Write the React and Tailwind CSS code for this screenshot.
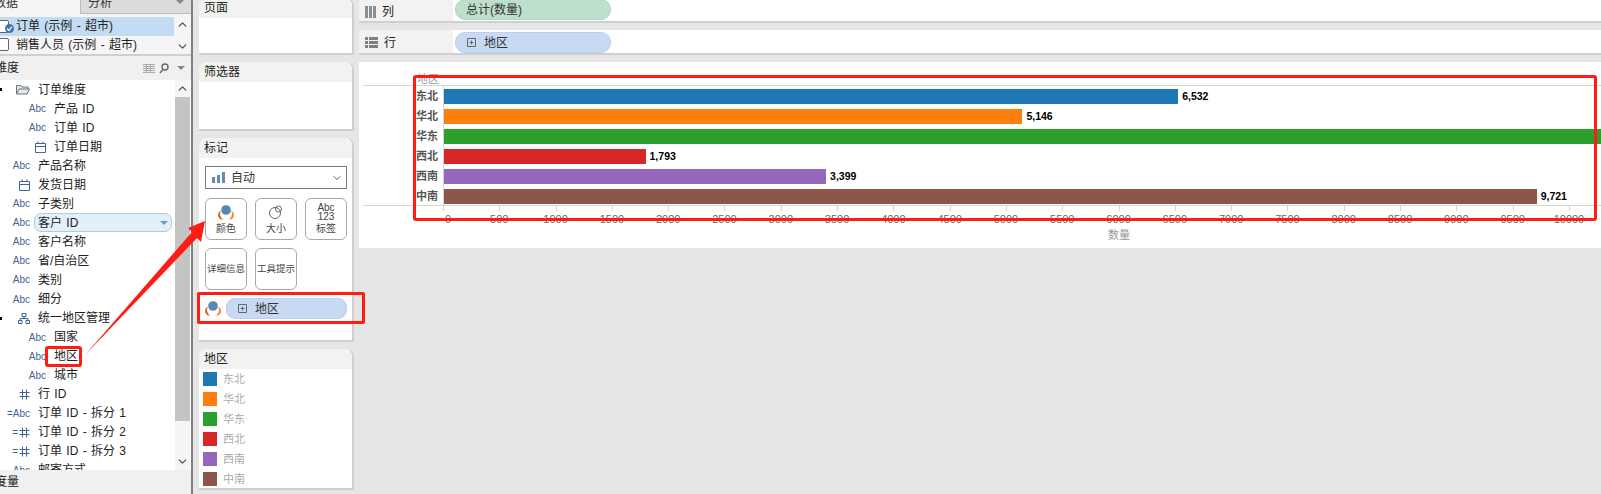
import React from 'react'
import { ChevronUp, ChevronDown } from 'lucide-react'

const fontStack = { fontFamily: '"Liberation Sans", "Noto Sans CJK SC", sans-serif' }

const fields = [
  { type: 'folder', name: '订单维度', dot: true },
  { type: 'abc', name: '产品 ID', nested: true },
  { type: 'abc', name: '订单 ID', nested: true },
  { type: 'date', name: '订单日期', nested: true },
  { type: 'abc', name: '产品名称' },
  { type: 'date', name: '发货日期' },
  { type: 'abc', name: '子类别' },
  { type: 'abc', name: '客户 ID', active: true },
  { type: 'abc', name: '客户名称' },
  { type: 'abc', name: '省/自治区' },
  { type: 'abc', name: '类别' },
  { type: 'abc', name: '细分' },
  { type: 'tree', name: '统一地区管理', dot: true },
  { type: 'abc', name: '国家', nested: true },
  { type: 'abc', name: '地区', nested: true },
  { type: 'abc', name: '城市', nested: true },
  { type: 'hash', name: '行 ID' },
  { type: 'calcAbc', name: '订单 ID - 拆分 1' },
  { type: 'calcHash', name: '订单 ID - 拆分 2' },
  { type: 'calcHash', name: '订单 ID - 拆分 3' },
  { type: 'abc', name: '邮寄方式' },
]

const regions = [
  { name: '东北', value: 6532, color: 'bg-[#1f77b4]', label: '6,532' },
  { name: '华北', value: 5146, color: 'bg-[#ff7f0e]', label: '5,146' },
  { name: '华东', value: 10400, color: 'bg-[#2ca02c]' },
  { name: '西北', value: 1793, color: 'bg-[#d62728]', label: '1,793' },
  { name: '西南', value: 3399, color: 'bg-[#9467bd]', label: '3,399' },
  { name: '中南', value: 9721, color: 'bg-[#8c564b]', label: '9,721' },
]

const ticks = Array.from({ length: 21 }, (_, i) => i * 500)

const HashIcon = () => (
  <svg width="11" height="11" viewBox="0 0 11 11" stroke="#3f6497" strokeWidth="1" fill="none">
    <path d="M3.5 0.5V10.5M7.5 0.5V10.5M0.5 3.5H10.5M0.5 7.5H10.5" />
  </svg>
)

const DateIcon = () => (
  <svg width="11" height="12" viewBox="0 0 11 12" stroke="#3f6497" strokeWidth="1" fill="none">
    <path d="M0.5 2.5H10.5V11.5H0.5ZM0.5 5.5H10.5M3 0.5V2.5M8 0.5V2.5" />
  </svg>
)

const FieldIcon = ({ type }) => {
  if (type === 'abc') return <span className="text-[10px] text-[#3f6497]">Abc</span>
  if (type === 'date') return <DateIcon />
  if (type === 'hash') return <HashIcon />
  if (type === 'calcAbc') return <span className="text-[10px] text-[#3f6497]">=Abc</span>
  if (type === 'calcHash') return (
    <span className="flex items-center gap-[1px] text-[10px] text-[#3f6497]">=<HashIcon /></span>
  )
  if (type === 'folder') return (
    <svg width="14" height="11" viewBox="0 0 14 11" fill="none" stroke="#6b7280">
      <path d="M0.5 10V1.5H5L6 3H12V5M0.5 10L3 5H13.5L11 10Z" fill="#e5e7eb" />
    </svg>
  )
  return (
    <svg width="12" height="11" viewBox="0 0 12 11" fill="none" stroke="#3f6497">
      <path d="M4 0.5H8V3.5H4ZM0.5 7.5H4V10.5H0.5ZM8 7.5H11.5V10.5H8ZM6 3.5V5.5M2 7.5V5.5H10V7.5" />
    </svg>
  )
}

const FieldRow = ({ field }) => (
  <div className="relative flex h-[19.05px] shrink-0 items-center text-[12px] text-[#222]">
    {field.dot && <span className="absolute left-0 top-[8px] h-[3px] w-[2px] bg-black" />}
    <span className={`flex w-[38px] shrink-0 justify-end pr-[8px] ${field.nested ? 'ml-[16px]' : ''}`}>
      <FieldIcon type={field.type} />
    </span>
    {field.active ? (
      <span className="-ml-[4px] flex h-[19px] w-[138px] items-center justify-between rounded-[7px] border border-[#a9cfe8] bg-[#e3f0fa] pl-[3px] pr-[3px]">
        {field.name}
        <span className="h-0 w-0 border-x-[4px] border-t-[4px] border-x-transparent border-t-[#6f9cc4]" />
      </span>
    ) : (
      <span className="whitespace-nowrap">{field.name}</span>
    )}
  </div>
)

const PlusBox = () => (
  <svg width="9" height="9" viewBox="0 0 9 9" fill="none" stroke="#666">
    <path d="M0.5 0.5H8.5V8.5H0.5ZM2.5 4.5H6.5M4.5 2.5V6.5" />
  </svg>
)

const ColorIcon = () => (
  <svg width="16" height="15" viewBox="0 0 16 15">
    <circle cx="4.5" cy="10" r="4.5" fill="#d9652a" />
    <circle cx="11.5" cy="10" r="4.5" fill="#f08a3c" />
    <circle cx="8" cy="9" r="6" fill="#fff" />
    <circle cx="8" cy="5" r="4.8" fill="#5b86ad" />
  </svg>
)

const Card = ({ title, className, children }) => (
  <div className={`flex shrink-0 flex-col overflow-hidden rounded-t-lg border-b-2 border-r-2 border-[#cfcfcf] bg-white ${className}`}>
    <div className="flex h-[20px] shrink-0 items-center bg-[#f2f2f0] pl-[5px] text-[12px] text-[#222]">{title}</div>
    {children}
  </div>
)

const MarkButton = ({ icon, children }) => (
  <div className={`flex h-[42px] w-[42px] flex-col items-center rounded-md border border-[#a8a8a8] bg-white text-[10px] leading-[12px] text-[#444] ${icon ? 'pt-[5px]' : 'justify-center'}`}>
    {icon && <div className="flex h-[16px] shrink-0 flex-col items-center justify-center">{icon}</div>}
    <span className={`whitespace-nowrap ${icon ? 'mt-[3px]' : 'text-[9.5px]'}`}>{children}</span>
  </div>
)

const ShelfRow = ({ icon, label, labelClass, pillClass, children }) => (
  <div className="flex h-full items-stretch border-b-2 border-[#cfcfcf] bg-white">
    <div className={`flex w-[94px] shrink-0 items-center gap-[6px] bg-[#f2f2f0] pl-[6px] text-[12px] text-[#222] ${labelClass}`}>
      {icon}
      {label}
    </div>
    <div className={`ml-[2px] flex h-[21px] w-[156px] items-center rounded-[10px] border text-[12px] text-[#333] ${pillClass}`}>
      {children}
    </div>
  </div>
)

export default function App() {
  return (
    <div className="relative flex h-[494px] w-[1601px] overflow-hidden bg-[#e6e6e6] [word-spacing:1px]" style={fontStack}>
      {/* data panel */}
      <div className="flex w-[191px] shrink-0 flex-col overflow-hidden bg-white">
        <div className="flex h-[17px] shrink-0 bg-[#f5f5f5] text-[12px] text-[#333]">
          <div className="w-[80px] -translate-x-[1px] -translate-y-[7px] leading-[20px]">
            <span className="-ml-[5px]">数据</span>
          </div>
          <div className="flex h-[14px] flex-1 justify-between overflow-hidden border-b border-l border-[#bdbdbd] bg-[#dcdcdc] px-[7px] leading-[6px]">
            <span>分析</span>
            <span className="h-0 w-0 border-x-[4px] border-t-[4px] border-x-transparent border-t-[#888]" />
          </div>
        </div>
        <div className="flex h-[39px] shrink-0 border-b-2 border-[#d0d0d0] bg-[#f5f5f5] text-[12px] text-[#222]">
          <div className="flex w-[174px] flex-col">
            <div className="flex h-[19px] items-center bg-[#c4dcf3]">
              <span className="relative -ml-[2px] h-[13px] w-[11px] rounded-[2px] border border-[#666] bg-white">
                <span className="absolute -bottom-[1px] -right-[6px] flex h-[9px] w-[9px] items-center justify-center rounded-full bg-[#3f73b5]">
                  <svg width="7" height="7" viewBox="0 0 7 7" fill="none" stroke="#fff" strokeWidth="1.2">
                    <path d="M1 3.5L3 5.5L6 1.5" />
                  </svg>
                </span>
              </span>
              <span className="ml-[7px] whitespace-nowrap">订单 (示例 - 超市)</span>
            </div>
            <div className="flex h-[19px] items-center">
              <span className="-ml-[2px] h-[13px] w-[11px] rounded-[2px] border border-[#666] bg-white" />
              <span className="ml-[7px] whitespace-nowrap">销售人员 (示例 - 超市)</span>
            </div>
          </div>
          <div className="ml-[1px] flex w-[15px] flex-col items-center justify-between py-[1px] text-[#555]">
            <ChevronUp size={13} strokeWidth={2.5} />
            <ChevronDown size={13} strokeWidth={2.5} />
          </div>
        </div>
        <div className="flex h-[24px] shrink-0 items-center bg-[#f0f0f0] text-[12px] text-[#222]">
          <span className="-ml-[5px]">维度</span>
          <svg className="ml-auto" width="12" height="9" viewBox="0 0 12 9" stroke="#aaa">
            <path d="M0 .5H12M0 2.5H12M0 4.5H12M0 6.5H12M0 8.5H12M3.5 0V9M7.5 0V9" />
          </svg>
          <svg className="ml-[4px]" width="10" height="11" viewBox="0 0 10 11" fill="none" stroke="#667" strokeWidth="1.4">
            <circle cx="6" cy="4" r="3" />
            <path d="M4 6.5L1 10" />
          </svg>
          <span className="ml-[8px] mr-[6px] h-0 w-0 border-x-[4px] border-t-[4px] border-x-transparent border-t-[#7a8794]" />
        </div>
        <div className="flex min-h-0 flex-1">
          <div className="w-[175px] shrink-0 overflow-hidden">
            {fields.map((f) => <FieldRow key={f.name + f.type} field={f} />)}
          </div>
          <div className="flex w-[15px] flex-col items-center bg-[#f5f5f5] text-[#555]">
            <ChevronUp className="mt-[2px] shrink-0" size={13} strokeWidth={2.5} />
            <div className="mt-[2px] h-[324px] w-full bg-[#c4c4c4]" />
            <ChevronDown className="mt-[34px] shrink-0" size={13} strokeWidth={2.5} />
          </div>
        </div>
        <div className="flex h-[24px] shrink-0 items-center bg-[#f0f0f0] text-[12px] text-[#222]">
          <span className="-ml-[5px]">度量</span>
        </div>
      </div>
      <div className="w-[2px] shrink-0 bg-[#808080]" />

      {/* shelves and cards */}
      <div className="ml-[6px] flex w-[155px] shrink-0 flex-col gap-[7px]">
        <Card title="页面" className="-mt-[2px] h-[57px]" />
        <Card title="筛选器" className="h-[69px]" />
        <Card title="标记" className="h-[204px]">
          <div className="ml-[6px] mr-[5px] mt-[8px] flex h-[23px] items-center border border-[#777] pl-[6px] text-[12px] text-[#333]">
            <svg width="13" height="11" viewBox="0 0 13 11" fill="#5f8db5">
              <path d="M0 5H3V11H0ZM5 3H8V11H5ZM10 0H13V11H10Z" />
            </svg>
            <span className="ml-[6px]">自动</span>
            <ChevronDown className="ml-auto mr-[3px]" size={12} strokeWidth={1.5} />
          </div>
          <div className="mx-[6px] mt-[9px] grid grid-cols-[42px_42px_42px] gap-x-[8px] gap-y-[8px]">
            <MarkButton icon={<ColorIcon />}>颜色</MarkButton>
            <MarkButton
              icon={
                <svg width="14" height="14" viewBox="0 0 14 14" fill="none" stroke="#666">
                  <circle cx="6" cy="8" r="5.5" />
                  <circle cx="9.5" cy="4" r="3" />
                </svg>
              }
            >
              大小
            </MarkButton>
            <MarkButton
              icon={
                <>
                  <span className="text-[10px] leading-[9px]">Abc</span>
                  <span className="text-[10px] leading-[9px]">123</span>
                </>
              }
            >
              标签
            </MarkButton>
            <MarkButton>详细信息</MarkButton>
            <MarkButton>工具提示</MarkButton>
          </div>
          <div className="mt-[8px] flex items-center pl-[6px] pr-[5px]">
            <ColorIcon />
            <div className="ml-[5px] flex h-[21px] flex-1 items-center gap-[8px] rounded-[9px] border border-[#bcd0ee] bg-[#c8d9f3] pl-[11px] text-[12px] text-[#333]">
              <PlusBox />
              地区
            </div>
          </div>
        </Card>
        <Card title="地区" className="h-[141px]">
          <div className="flex flex-col gap-[6px] pl-[4px] pt-[3px]">
            {regions.map((r) => (
              <div key={r.name} className="flex h-[14px] items-center gap-[6px] text-[11px] text-[#aaa]">
                <span className={`h-[14px] w-[14px] ${r.color}`} />
                {r.name}
              </div>
            ))}
          </div>
        </Card>
      </div>

      {/* view */}
      <div className="ml-[5px] flex min-w-0 flex-1 flex-col gap-[7px]">
        <div className="h-[23px] shrink-0">
          <ShelfRow
            label="列"
            labelClass="pt-[3px]"
            pillClass="-mt-[1px] border-[#b2d6c1] bg-[#bddfcb] pl-[10px] pt-[1px]"
            icon={
              <svg width="11" height="12" viewBox="0 0 11 12" fill="#8a8f96">
                <path d="M0 0H3V12H0ZM4 0H7V12H4ZM8 0H11V12H8Z" />
              </svg>
            }
          >
            总计(数量)
          </ShelfRow>
        </div>
        <div className="h-[25px] shrink-0">
          <ShelfRow
            label="行"
            labelClass="pt-[2px]"
            pillClass="mt-[2px] gap-[8px] border-[#bcd0ee] bg-[#c8d9f3] pl-[11px]"
            icon={
              <svg width="13" height="11" viewBox="0 0 13 11" fill="#7b8087">
                <path d="M0 0H3V3H0ZM4 0H13V3H4ZM0 4H3V7H0ZM4 4H13V7H4ZM0 8H3V11H0ZM4 8H13V11H4Z" />
              </svg>
            }
          >
            <PlusBox />
            地区
          </ShelfRow>
        </div>
        <div className="h-[186px] shrink-0 overflow-hidden bg-white pl-[4px]">
          <div className="flex h-[24px] items-end border-b border-[#d4d4d4] pl-[54px] text-[11px] leading-[11px] text-[#8f9aa5]">
            地区
          </div>
          <div className="flex h-[120px] border-b border-[#d4d4d4]">
            <div className="w-[81px] shrink-0 border-r border-[#d4d4d4] pt-[3px]">
              {regions.map((r) => (
                <div key={r.name} className="mb-[5px] flex h-[15px] items-center justify-end pr-[5px] text-[11px] font-bold text-[#555]">
                  {r.name}
                </div>
              ))}
            </div>
            <div className="min-w-0 flex-1 pt-[3px]">
              {regions.map((r) => (
                <div key={r.name} className="mb-[5px] flex h-[15px] items-center">
                  <div className={`h-[15px] shrink-0 ${r.color}`} style={{ width: r.value * 0.1124 }} />
                  {r.label && <span className="ml-[4px] text-[10.5px] font-bold text-black">{r.label}</span>}
                </div>
              ))}
            </div>
          </div>
          <div className="flex pl-[80px]">
            {ticks.map((t) => (
              <div key={t} className="w-[56.3px] shrink-0">
                <div className="h-[5px] w-[1px] bg-[#d4d4d4]" />
                <div className={`mt-[1px] w-[56px] text-center text-[11px] leading-[14px] text-[#666] ${t === 0 ? '-ml-[23px]' : '-ml-[28px]'}`}>{t}</div>
              </div>
            ))}
          </div>
          <div className="ml-[745px] mt-[2px] text-[11px] leading-[14px] text-[#999]">数量</div>
        </div>
      </div>

      {/* red annotations drawn on top of the screenshot */}
      <div className="absolute left-[45px] top-[346px] h-[21px] w-[37px] rounded-[3px] border-[3px] border-[#ff1c14]" />
      <div className="absolute left-[197px] top-[292px] h-[32px] w-[168px] rounded-[2px] border-[3px] border-[#ff1c14]" />
      <div className="absolute left-[413px] top-[75px] h-[146px] w-[1184px] rounded-[3px] border-[3px] border-[#ff1c14]" />
      <svg className="absolute left-0 top-0" width="260" height="400" viewBox="0 0 260 400">
        <polygon points="85,355 192,232 188,228 205,221 201,242 197,238" fill="#ff1c14" />
      </svg>
    </div>
  )
}
